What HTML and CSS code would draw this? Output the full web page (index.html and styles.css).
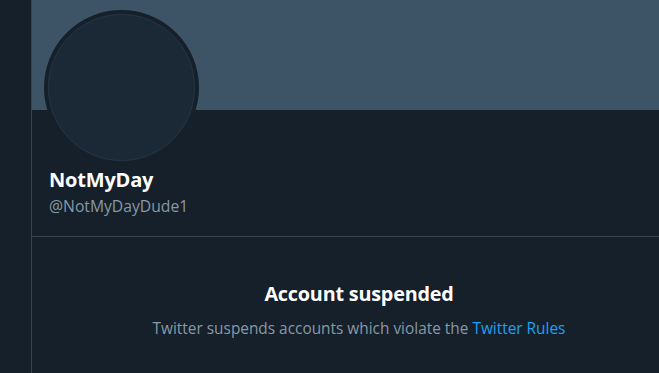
FILE: index.html
```html
<!DOCTYPE html>
<html>
<head>
<meta charset="utf-8">
<link rel="stylesheet" href="styles.css">
</head>
<body>
<div class="page">
  <aside class="side"></aside>
  <main class="main">
    <div class="banner"></div>
    <div class="profile">
      <div class="avatar"><div class="avatar-inner"></div></div>
      <div class="name">NotMyDay</div>
      <div class="handle">@NotMyDayDude1</div>
    </div>
    <div class="notice">
      <div class="title">Account suspended</div>
      <div class="text">Twitter suspends accounts which violate the <a class="link" href="#">Twitter Rules</a></div>
    </div>
  </main>
</div>
</body>
</html>
```
FILE: styles.css
```css
html, body {
  margin: 0;
  padding: 0;
  background: #15202b;
  height: 100%;
  overflow: hidden;
}
body {
  font-family: "Open Sans", "Noto Sans", sans-serif;
}
.page {
  display: flex;
  height: 373px;
}
.side {
  width: 31px;
  flex: none;
  background: #15202b;
  border-right: 1px solid #38444d;
}
.main {
  flex: 1;
  position: relative;
}
.banner {
  height: 110px;
  background: #3d5466;
}
.profile {
  position: relative;
  padding: 0 0 0 17px;
  height: 126px;
  border-bottom: 1px solid #38444d;
}
.avatar {
  position: absolute;
  left: 12px;
  top: -100px;
  width: 147px;
  height: 147px;
  border: 4px solid #15202b;
  border-radius: 50%;
  background: #1b2836;
}
.avatar-inner {
  width: 100%;
  height: 100%;
  box-sizing: border-box;
  border-radius: 50%;
  border: 1px solid #243444;
}
.name {
  padding-top: 57px;
  color: #ffffff;
  font-weight: 700;
  font-size: 20px;
  line-height: 26px;
  letter-spacing: -0.2px;
}
.handle {
  margin-top: 3px;
  color: #8899a6;
  font-size: 15.7px;
  line-height: 20px;
}
.notice {
  text-align: center;
  padding-top: 43px;
  padding-left: 27px;
}
.title {
  color: #ffffff;
  font-weight: 700;
  font-size: 19.8px;
  line-height: 28px;
  letter-spacing: -0.2px;
}
.text {
  margin-top: 11px;
  color: #8899a6;
  font-size: 15.4px;
  line-height: 20px;
}
.link {
  color: #1da1f2;
  text-decoration: none;
}
```
